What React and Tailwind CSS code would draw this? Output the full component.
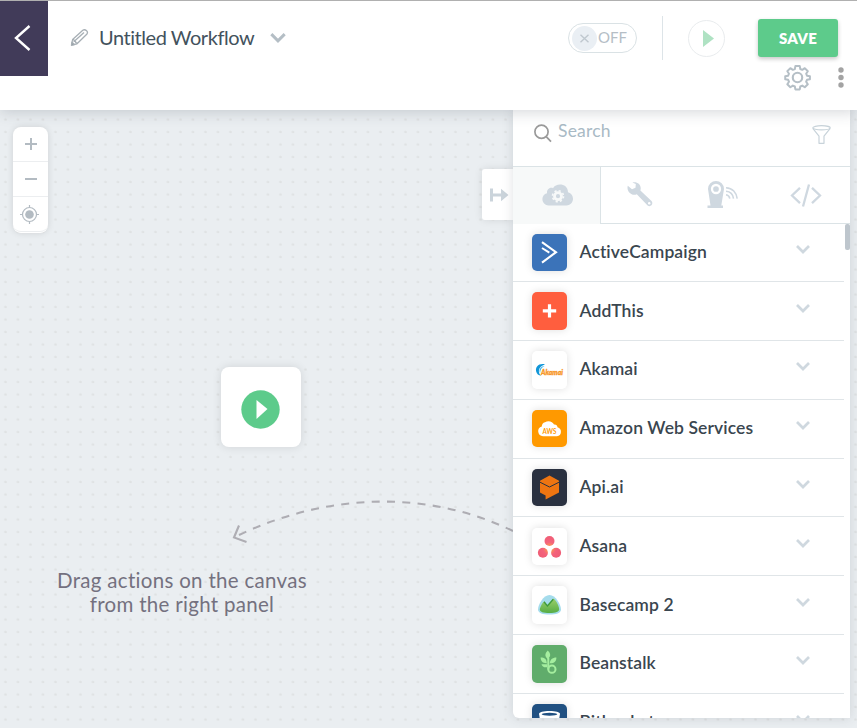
import React from "react";

function Chevron({ className }) {
  return (
    <svg className={className} viewBox="0 0 14 9" fill="none" stroke="currentColor" strokeWidth="2.7">
      <path d="M1 1 7 7 13 1" />
    </svg>
  );
}

const logos = {
  ActiveCampaign: {
    tile: "bg-[#3b73b9]",
    art: (
      <g fill="none" stroke="#fff">
        <path d="M10 8.2 24 18.2 10 28.6" strokeWidth="2.1" />
        <path d="M10 14 17.3 18.6" strokeWidth="2" />
      </g>
    ),
  },
  AddThis: {
    tile: "bg-[#ff5e3e]",
    art: <path d="M17.5 12.2v13.4M10.8 18.9h13.4" stroke="#fff" strokeWidth="3.2" />,
  },
  Akamai: {
    tile: "bg-white",
    art: (
      <g>
        <path d="M13 13.4C6.800 12 3.200 16 4.100 20.200 4.700 22.700 6.500 24.500 9.200 24.800 5.700 22 5.600 15.500 13 13.400Z" fill="#1196d8" />
        <path d="M12.600 14.900C8.300 15 6.600 18.800 8.100 22 8.300 18.600 9.600 16.300 12.600 14.900Z" fill="#45b4e8" />
        <text x="9" y="23.500" textLength="22" lengthAdjust="spacingAndGlyphs" fontFamily="Lato, sans-serif" fontSize="7" fontWeight="900" fontStyle="italic" fill="#f7941e" stroke="#f7941e" strokeWidth=".3">Akamai</text>
      </g>
    ),
  },
  "Amazon Web Services": {
    tile: "bg-[#ff9900]",
    art: (
      <g>
        <path d="M11 26.200a5 5 0 0 1-1.200-9.800 4.500 4.500 0 0 1 3.200-4.200c3.300-2.200 7.800-.8 9 2.400 1.800-.4 3.300.8 3.500 2.600a4.600 4.600 0 0 1-.5 9Z" fill="#fff" />
        <text x="10.600" y="24" textLength="13.800" lengthAdjust="spacingAndGlyphs" fontFamily="Lato, sans-serif" fontSize="7.500" fontWeight="700" fill="#ff9900">AWS</text>
      </g>
    ),
  },
  "Api.ai": {
    tile: "bg-[#2a3140]",
    art: (
      <g>
        <path d="M17.500 6.500 27 11.800V23.600L13.600 30.500V26.400L8 23.600V11.800Z" fill="#ef7511" />
        <path d="M8 13.200 17.500 18 27 13.200" fill="none" stroke="#2a3140" strokeWidth="1" />
      </g>
    ),
  },
  Asana: {
    tile: "bg-white",
    art: (
      <g>
        <defs>
          <radialGradient id="asana" gradientUnits="userSpaceOnUse" cx="17.500" cy="20.500" r="13">
            <stop offset="0" stopColor="#ffb13b" />
            <stop offset=".5" stopColor="#f4637c" />
            <stop offset="1" stopColor="#ef5d75" />
          </radialGradient>
        </defs>
        <g fill="url(#asana)">
          <circle cx="17.500" cy="13" r="5" />
          <circle cx="10.900" cy="24.700" r="5" />
          <circle cx="24.100" cy="24.700" r="5" />
        </g>
      </g>
    ),
  },
  "Basecamp 2": {
    tile: "bg-white",
    art: (
      <g>
        <defs>
          <linearGradient id="hill" x1="0" y1="0" x2="0" y2="1">
            <stop offset="0" stopColor="#9bcf6c" />
            <stop offset="1" stopColor="#57ad45" />
          </linearGradient>
        </defs>
        <path d="M17.500 9C11.500 9 6 18.500 6 23.500c0 3.700 5 5.100 11.500 5.100S29 27.200 29 23.500C29 18.500 23.500 9 17.500 9Z" fill="#a5dcec" />
        <path d="M7.800 23c.8-3 2.800-6.300 4.200-7.500l3.300 4 6.200-7c3 2.200 5.400 7.500 5.700 10.500.2 2.900-3.500 4-9.700 4s-9.900-1-9.700-4Z" fill="url(#hill)" />
        <path d="m12 15.800 3.400 4.200 5.900-6.800" fill="none" stroke="#3f9b3c" strokeWidth="1.400" />
      </g>
    ),
  },
  Beanstalk: {
    tile: "bg-[#60ac6b]",
    art: (
      <g fill="#a5ee9f">
        <path d="M15.800 5.600c3.200 3.200 3.200 6 0 8.400-3.200-2.400-3.200-5.200 0-8.400ZM8.600 12.600c4 0 6 1.600 6.200 5.600-3.600.2-6-1.400-6.200-5.600ZM24.400 12.400c0 3.900-2 5.900-6.600 5.800.2-3.600 2.400-5.800 6.600-5.800Z" />
        <g fill="none" stroke="#a5ee9f" strokeWidth="2">
          <path d="M16.300 13v11.500" />
          <circle cx="19.900" cy="24.200" r="3.600" />
        </g>
        <path d="M9.500 19.200h5.800v3c-3.300.5-5.200-.6-5.800-3Z" />
      </g>
    ),
  },
  Bitbucket: {
    tile: "bg-[#205081]",
    art: (
      <g>
        <path d="M7 10c0-2 4.500-3 10.500-3S28 8 28 10l-2.800 16c-2 4-13.400 4-15.400 0Z" fill="#fff" />
        <ellipse cx="17.500" cy="10.300" rx="7.800" ry="1.500" fill="#205081" />
      </g>
    ),
  },
};

const apps = [
  "ActiveCampaign",
  "AddThis",
  "Akamai",
  "Amazon Web Services",
  "Api.ai",
  "Asana",
  "Basecamp 2",
  "Beanstalk",
  "Bitbucket",
];

function AppRow({ name }) {
  const logo = logos[name];
  return (
    <li className="flex h-[58.8px] w-[331px] shrink-0 items-center border-b border-[#e0e5e8] pl-[19px] pr-[34px]">
      <span className={`h-[37.5px] w-[35px] overflow-hidden rounded-[5px] shadow-[0_0_8px_rgba(0,0,0,0.13)] ${logo.tile}`}>
        <svg viewBox="0 0 35 37.5" className="h-full w-full">{logo.art}</svg>
      </span>
      <span className="ml-[12.5px] mb-px whitespace-nowrap text-[17.5px] font-semibold leading-6 tracking-[0.1px] text-[#3a464f]">{name}</span>
      <Chevron className="mb-[6px] ml-auto h-[9px] w-[14px] text-[#cfd8df]" />
    </li>
  );
}

function Header() {
  return (
    <header className="relative z-20 flex h-[110px] shrink-0 items-start border-t border-[#b0b0b0] bg-white shadow-[0_2px_14px_rgba(60,70,80,0.22)]">
      <button className="flex h-[75px] w-12 items-center justify-center bg-[#413b59]">
        <svg className="mb-px mr-[5px] h-7 w-[18px]" viewBox="0 0 18 28" fill="none" stroke="#fff" strokeWidth="2.4">
          <path d="M16.500 2 3 14 16.500 26" />
        </svg>
      </button>
      <div className="flex h-[72px] items-center pl-[22px]">
        <svg className="h-[19px] w-[19px]" viewBox="0 0 19 19" fill="none" stroke="#a7afb5" strokeWidth="1.300" strokeLinejoin="round">
          <path d="M1.500 17.200 2.600 11.500 12.800 2.300c2.300-1.700 5.800 1.300 4.200 3.700L7 15.800ZM2.600 11.500c1.600-.2 1.700 1 1.500 1.900 1.200-.2 1.800.3 1.600 1.300.9-.2 1.500.2 1.300 1.100M4.600 13 14 4.600" />
          <path d="M1.500 17.200 2 14.200 4.400 16.500Z" fill="#7d878e" />
        </svg>
        <h1 className="ml-[10px] w-[155px] whitespace-nowrap text-[20px] leading-7 tracking-[-0.45px] text-[#43525d]">Untitled Workflow</h1>
        <Chevron className="ml-[16px] mt-[2px] h-[10px] w-4 text-[#b4bec5]" />
      </div>
      <div className="ml-auto flex flex-col">
        <div className="flex h-[74px] items-center pr-[19px]">
          <div className="flex h-[30px] w-[69px] items-center rounded-full border border-[#dae2e5] pl-[3px] text-[#b5bec6]">
            <span className="flex h-[25px] w-[25px] items-center justify-center rounded-full bg-[#eaeff4]">
              <svg className="h-[9px] w-[9px]" viewBox="0 0 9 9" stroke="#bfc8cf" strokeWidth="1.400"><path d="m.5.8 8 7.400M8.500.8l-8 7.400" /></svg>
            </span>
            <span className="mb-[2px] ml-px text-[15px] leading-5">OFF</span>
          </div>
          <span className="ml-[25px] h-11 w-px bg-[#dde4e8]" />
          <button className="ml-[25px] flex h-[37px] w-[37px] items-center justify-center rounded-full border border-[#e9ecee]">
            <svg className="ml-[3px] h-[17px] w-[11px]" viewBox="0 0 11 17" fill="#afe2c3"><path d="M0 0 11 8.500 0 17Z" /></svg>
          </button>
          <button className="ml-[33px] h-[38px] w-20 rounded-[3px] bg-[#5dcb8b] text-[15px] font-extrabold tracking-[0.2px] text-white shadow-[0_2px_4px_rgba(0,0,0,0.22)]">SAVE</button>
        </div>
        <div className="-mt-[11px] flex items-center justify-end pr-[13px]">
          <svg className="h-[27px] w-[27px]" viewBox="0 0 24 24" fill="none" stroke="#b5bfc6" strokeWidth="1.900" strokeLinejoin="round">
            <path d="M9.900 1h4.200l.5 2.800 1.900.8 2.400-1.600 2.900 2.900-1.600 2.400.8 1.900 2.800.5v2.900l-2.800.5-.8 1.900 1.600 2.400-2.900 2.900-2.400-1.600-1.900.8-.5 2.800H9.900l-.5-2.800-1.900-.8-2.400 1.600-2.900-2.900 1.600-2.400-.8-1.900-2.800-.5v-2.900l2.800-.5.8-1.900-1.600-2.400 2.900-2.900 2.400 1.600 1.900-.8Z" transform="translate(.9 .9) scale(.93)" />
            <circle cx="12" cy="12" r="4.200" />
          </svg>
          <svg className="ml-[27px] h-[21px] w-[6px]" viewBox="0 0 6 21" fill="#a3a3a3">
            <circle cx="3" cy="3" r="2.700" /><circle cx="3" cy="10.500" r="2.700" /><circle cx="3" cy="18" r="2.700" />
          </svg>
        </div>
      </div>
    </header>
  );
}

function ZoomControls() {
  return (
    <div className="absolute left-[13px] top-[17px] flex h-[106px] w-[35px] flex-col rounded-[8px] bg-white text-[#b3bbc2] shadow-[0_0_7px_rgba(0,0,0,0.12)]">
      <button className="flex h-[35px] items-center justify-center border-b border-[#eceef0]">
        <svg className="h-[12px] w-[12px]" viewBox="0 0 12 12" stroke="currentColor" strokeWidth="2"><path d="M6 0v12M0 6h12" /></svg>
      </button>
      <button className="flex h-[35px] items-center justify-center border-b border-[#eceef0]">
        <svg className="h-[12px] w-[12px]" viewBox="0 0 12 12" stroke="currentColor" strokeWidth="2"><path d="M0 6h12" /></svg>
      </button>
      <button className="flex h-[35px] items-center justify-center rounded-b-[8px] border-b border-[#eceef0]">
        <svg className="mr-[2px] h-[19px] w-[19px]" viewBox="0 0 19 19" fill="none" stroke="currentColor" strokeWidth="1.200">
          <circle cx="9.500" cy="9.500" r="7" />
          <circle cx="9.500" cy="9.500" r="4.300" fill="currentColor" stroke="none" />
          <path d="M9.500 0v2.500M9.500 16.500V19M0 9.500h2.500M16.500 9.500H19" />
        </svg>
      </button>
    </div>
  );
}

function Tabs() {
  return (
    <nav className="flex h-[58px] shrink-0 border-t border-[#dbe3e6] text-[#cfd8e0]">
      <button className="flex w-[88px] items-center justify-center border-r border-[#dbe3e6] bg-[#f7f9f9]">
        <svg className="mb-[2px] ml-[2px] h-[22px] w-8" viewBox="0 0 32 22">
          <path d="M6.500 21.500C-1.200 21-1.500 10.500 5 9.200 4.600 5 8.400 3 11 4.200 14-1.300 25.800-1 26 8.200c7 1.800 6.800 12.700-1.500 13.300Z" fill="currentColor" />
          <circle cx="16" cy="12.200" r="3.500" fill="none" stroke="#f7f9f9" strokeWidth="2.800" />
          <circle cx="16" cy="12.200" r="5.500" fill="none" stroke="#f7f9f9" strokeWidth="1.600" strokeDasharray="2.160 2.160" />
        </svg>
      </button>
      <div className="flex flex-1 border-b border-[#dbe3e6]">
        <button className="flex w-[78px] items-center justify-center">
          <svg className="mb-px h-[25px] w-[26px]" viewBox="0 0 26 25">
            <path d="M.8 3.700 5 7.300 8.500 5.800 8.800 2 5.400.5c4-1.300 8.700 1.300 8.300 6.300l-.3 1.700L24.500 19c2.400 2.700-.9 6.800-3.900 4.500L9.800 12.300C4.800 14.600-.9 9.400.8 3.700Z" fill="currentColor" />
            <circle cx="22.200" cy="21.300" r="1.200" fill="#fff" />
          </svg>
        </button>
        <button className="flex w-[87px] items-center justify-center">
          <svg className="mb-px h-[28px] w-[31px]" viewBox="0 0 31 28">
            <path d="M1 8a8 8 0 0 1 16 0l-2.700 16.500H16V27H.5v-2.500h3Z" fill="currentColor" />
            <circle cx="9" cy="8" r="4" fill="none" stroke="#fff" strokeWidth="2.300" />
            <g fill="none" stroke="currentColor" strokeWidth="1.600">
              <path d="M19 6.700c6.500.3 10.500 5 11.200 11M19 10.300c4.400.3 7 3.200 7.500 7.400M19 13.800c2.300.3 3.500 1.700 3.800 3.900" />
            </g>
          </svg>
        </button>
        <button className="flex w-[80px] items-center justify-center">
          <svg className="mt-px h-[23px] w-[32px]" viewBox="0 0 32 23" fill="none" stroke="currentColor" strokeWidth="2.300">
            <path d="M10 3.800 2 11.500l8 7.700M22 3.800l8 7.700-8 7.700M19 .5 13 22.500" />
          </svg>
        </button>
      </div>
    </nav>
  );
}

function ActionsPanel() {
  return (
    <aside className="relative flex h-[608px] w-[337px] flex-col rounded-bl-[6px] bg-white shadow-[0_0_12px_rgba(60,70,80,0.16)]">
      <div className="flex h-[56px] shrink-0 items-start pl-[21px] pr-[19px] pt-[9px]">
        <svg className="mt-[5px] h-[19px] w-[18px]" viewBox="0 0 18 19" fill="none" stroke="#9a9a9a" strokeWidth="1.700">
          <circle cx="7.500" cy="7.700" r="6.600" /><path d="m12.200 12.600 4.800 5" />
        </svg>
        <span className="ml-[6px] text-[17.5px] leading-[23px] tracking-[0.2px] text-[#a9bac5]">Search</span>
        <svg className="ml-auto mt-[6px] h-[19px] w-[19px]" viewBox="0 0 19 19" fill="none" stroke="#c8d3da" strokeWidth="1.200" strokeLinejoin="round">
          <ellipse cx="9.500" cy="2.800" rx="8.700" ry="2.100" />
          <path d="M.8 3.300 7 11.200V18.300h5v-7.100l6.200-7.900" />
        </svg>
      </div>
      <Tabs />
      <div className="flex min-h-0 flex-1 overflow-hidden rounded-bl-[6px]">
        <ul className="-mt-[0.6px] flex w-[332px] flex-col">
          {apps.map((name) => <AppRow key={name} name={name} />)}
        </ul>
        <span className="h-[26px] w-[5px] rounded-[2px] bg-[#bec6cd]" />
      </div>
    </aside>
  );
}

export default function App() {
  return (
    <div className="flex h-[728px] w-[857px] flex-col overflow-hidden font-['Lato','Open_Sans',sans-serif]">
      <Header />
      <main className="relative flex flex-1 items-start justify-end bg-[#eaeef1] bg-[radial-gradient(circle_at_5.5px_9.500px,#dfe2e3_1.100px,transparent_1.500px)] bg-[length:12.500px_12.500px] pr-[7px]">
        <ZoomControls />
        <div className="absolute left-[221px] top-[257px] flex h-20 w-20 items-center justify-center rounded-[8px] bg-white shadow-[0_0_10px_rgba(0,0,0,0.11)]">
          <svg className="mr-px mt-[4px] h-[39px] w-[39px]" viewBox="0 0 39 39">
            <circle cx="19.500" cy="19.500" r="19.200" fill="#5dcb8b" />
            <path d="M15.500 10v19L26.500 19Z" fill="#fff" />
          </svg>
        </div>
        <svg className="absolute left-[230px] top-[380px] h-[60px] w-[290px]" viewBox="230 490 290 60" fill="none" stroke="#aeadb3" strokeWidth="2.100">
          <path d="M239 535C330 492 430 490 515 532" strokeDasharray="8 7.300" />
          <path d="m239 525.500-5 12 12.500 4.500" />
        </svg>
        <p className="absolute left-[32px] top-[458px] w-[300px] text-center text-[20.500px] leading-6 tracking-[0.300px] text-[#74717f]">
          Drag actions on the canvas<br />from the right panel
        </p>
        <button className="mt-[59px] flex h-[51px] w-[31px] items-center justify-center rounded-l-[3px] bg-white pl-[3px] shadow-[0_0_8px_rgba(0,0,0,0.1)]">
          <svg className="mt-px h-[14px] w-[19px]" viewBox="0 0 19 14" fill="#cbd4db">
            <path d="M0 .5h3v5h8V.8L18.500 7 11 13.200V8.500H3v5H0Z" />
          </svg>
        </button>
        <ActionsPanel />
      </main>
    </div>
  );
}
